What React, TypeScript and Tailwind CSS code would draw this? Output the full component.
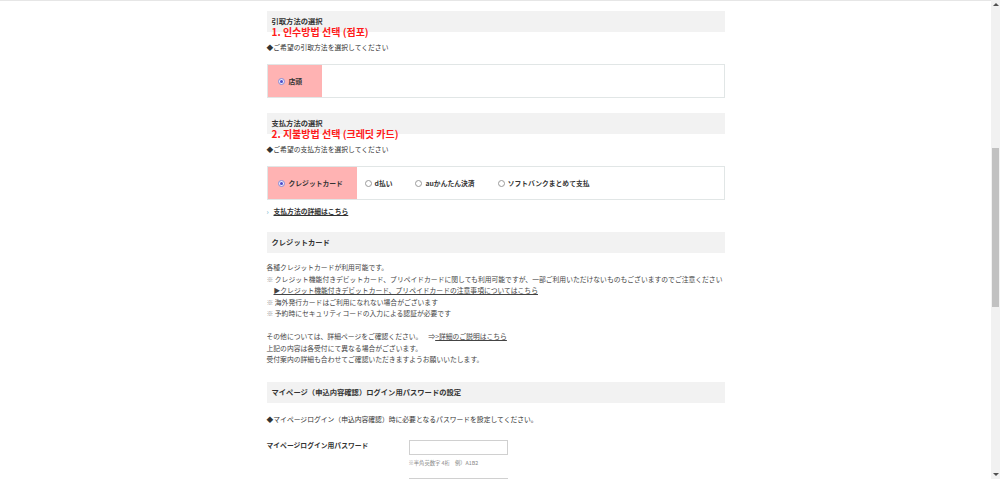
import React from 'react'

const jp = "font-['Noto_Sans_CJK_JP',sans-serif]"
const kr = "font-['Noto_Sans_CJK_KR',sans-serif]"

function Radio({ checked }: { checked?: boolean }) {
  return checked ? (
    <span className="flex h-[7px] w-[7px] shrink-0 items-center justify-center rounded-full border border-[#8a8ad0] bg-[#e8e8ff]">
      <span className="h-[3px] w-[3px] rounded-full bg-[#4b4bc8]" />
    </span>
  ) : (
    <span className="h-[7px] w-[7px] shrink-0 rounded-full border border-[#9a9a9a] bg-white" />
  )
}

function SectionHead({ title }: { title: string }) {
  return (
    <div className="h-[21px] bg-[#f2f2f2] pl-[5px] pt-[5px] text-[7.3px] font-bold leading-[10px] text-[#333]">{title}</div>
  )
}

function Note({ text }: { text: string }) {
  return <div className={`-mt-[7px] h-[14px] pl-[5px] text-[10px] font-bold leading-[14px] text-[#ff1a1a] ${kr}`}>{text}</div>
}

function Option({ label, checked }: { label: string; checked?: boolean }) {
  return (
    <div className="flex items-center gap-[3px]">
      <Radio checked={checked} />
      <span className="text-[6.8px] font-bold text-[#333]">{label}</span>
    </div>
  )
}

export default function App() {
  return (
    <div className={`flex h-[479px] w-[1000px] overflow-hidden bg-white ${jp}`}>
      <div className="flex-1 border-t border-[#e6e6e6] pt-[10px]">
        <div className="mx-auto w-[458px] text-[#333]">
          {/* 引取方法 */}
          <SectionHead title="引取方法の選択" />
          <Note text="1. 인수방법 선택 (점포)" />
          <div className="mt-[3px] text-[6.8px] leading-[10px]">◆ご希望の引取方法を選択してください</div>
          <div className="mt-[12px] flex h-[34px] border border-[#e1e6e6]">
            <div className="flex w-[54px] items-center gap-[4px] bg-[#ffb3b3] pl-[10px]">
              <Radio checked />
              <span className="text-[6.8px] font-bold text-[#333]">店頭</span>
            </div>
          </div>

          {/* 支払方法 */}
          <div className="mt-[15px]">
            <SectionHead title="支払方法の選択" />
          </div>
          <Note text="2. 지불방법 선택 (크레딧 카드)" />
          <div className="mt-[3px] text-[6.8px] leading-[10px]">◆ご希望の支払方法を選択してください</div>
          <div className="mt-[12px] flex h-[34px] items-stretch border border-[#e1e6e6]">
            <div className="flex w-[89px] items-center gap-[4px] bg-[#ffb3b3] pl-[10px]">
              <Radio checked />
              <span className="text-[6.8px] font-bold text-[#333]">クレジットカード</span>
            </div>
            <div className="ml-[8px] flex items-center gap-[23px]">
              <Option label="d払い" />
              <Option label="auかんたん決済" />
              <Option label="ソフトバンクまとめて支払" />
            </div>
          </div>
          <div className="mt-[6px] flex text-[6.8px] leading-[10px]">
            <span className="w-[7px] font-bold text-[#7fb8d0]">›</span>
            <span className="font-bold underline">支払方法の詳細はこちら</span>
          </div>

          {/* クレジットカード */}
          <div className="mt-[16px]">
            <SectionHead title="クレジットカード" />
          </div>
          <div className="mt-[9px] text-[6.8px] leading-[11.5px] text-[#444]">
            <div>各種クレジットカードが利用可能です。</div>
            <div>
              <span className="text-[#999]">※</span> クレジット機能付きデビットカード、プリペイドカードに関しても利用可能ですが、一部ご利用いただけないものもございますのでご注意ください
            </div>
            <div className="pl-[7px]">
              <span className="underline">▶クレジット機能付きデビットカード、プリペイドカードの注意事項についてはこちら</span>
            </div>
            <div>
              <span className="text-[#999]">※</span> 海外発行カードはご利用になれない場合がございます
            </div>
            <div>
              <span className="text-[#999]">※</span> 予約時にセキュリティコードの入力による認証が必要です
            </div>
            <div className="h-[11.5px]" />
            <div>
              その他については、詳細ページをご確認ください。<span className="ml-[6px]">⇒</span>
              <span className="underline">&gt;詳細のご説明はこちら</span>
            </div>
            <div>上記の内容は各受付にて異なる場合がございます。</div>
            <div>受付案内の詳細も合わせてご確認いただきますようお願いいたします。</div>
          </div>

          {/* パスワード */}
          <div className="mt-[16px]">
            <SectionHead title="マイページ（申込内容確認）ログイン用パスワードの設定" />
          </div>
          <div className="mt-[11px] text-[6.8px] leading-[10px]">◆マイページログイン（申込内容確認）時に必要となるパスワードを設定してください。</div>
          <div className="mt-[16px] flex">
            <div className="w-[142px] text-[6.8px] font-bold leading-[10px]">マイページログイン用パスワード</div>
            <div>
              <div className="h-[15px] w-[99px] border border-[#d0d0d0] bg-white" />
              <div className="mt-[4px] text-[5.3px] leading-[8px] text-[#888]">※半角英数字 4桁　例）A1B2</div>
              <div className="mt-[11px] h-[15px] w-[99px] border border-[#d0d0d0] bg-white" />
            </div>
          </div>
        </div>
      </div>

      {/* scrollbar */}
      <div className="flex w-[9px] flex-col items-center bg-[#f1f1f1]">
        <div className="mt-[3px] h-0 w-0 border-x-[3px] border-b-[3px] border-x-transparent border-b-[#505050]" />
        <div className="mt-[142px] h-[159px] w-[7px] bg-[#c1c1c1]" />
        <div className="mt-auto mb-[3px] h-0 w-0 border-x-[3px] border-t-[3px] border-x-transparent border-t-[#505050]" />
      </div>
    </div>
  )
}
